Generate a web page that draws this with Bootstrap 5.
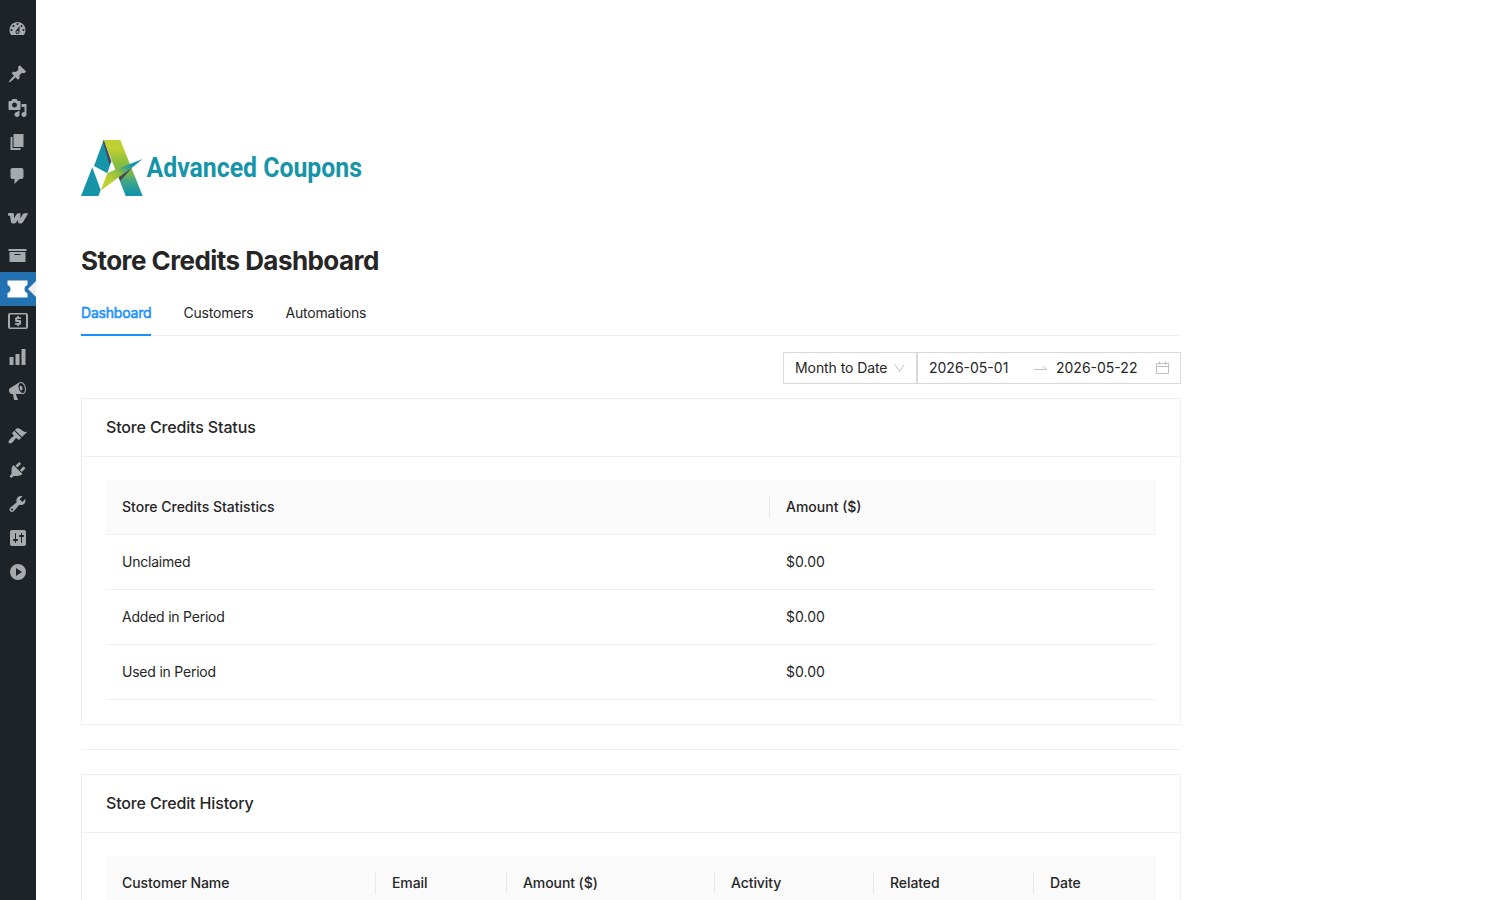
<!DOCTYPE html>
<html lang="en">
<head>
<meta charset="utf-8">
<meta name="viewport" content="width=device-width, initial-scale=1">
<title>Store Credits Dashboard</title>
<link href="https://cdn.jsdelivr.net/npm/bootstrap@5.3.0/dist/css/bootstrap.min.css" rel="stylesheet">
<style>
body{font-family:Inter,"Liberation Sans",sans-serif;font-size:14px;line-height:22px;color:#262626;background:#fff;height:900px;overflow:hidden}
.side-menu{width:36px;height:900px;background:#1d2327;padding-top:12px}
.side-menu a{height:34px;color:#a7aaad}
.side-menu svg{width:20px;height:20px;fill:currentColor;display:block;margin-left:7px;transform:translateX(.5px)}
.side-menu .wide-icon svg{margin-left:8px;transform:none}
.side-menu .gap-above{margin-top:11px}
.side-menu a.current{background:#2271b1;color:#fff}
.side-menu a.current svg{width:21px;transform:none}
.side-menu a.current::after{content:"";position:absolute;right:0;top:9px;border:8px solid transparent;border-right-color:#f0f0f1}
.page-area{width:1100px;height:900px;overflow:hidden;margin-left:45px;padding-top:140px}
.brand-logo{width:284px;height:56px;display:block;overflow:visible}
h1{font-size:26px;font-weight:700;line-height:32px;letter-spacing:-.56px;margin:49px 0 0}
.tab-strip{margin-top:13px;height:46px;border-bottom:1px solid #f0f0f0;gap:32px;padding-top:1px;letter-spacing:-.2px}
.tab-strip a{color:#262626;text-decoration:none;padding-top:11px;height:45px;white-space:nowrap}
.tab-strip a.on{color:#1890ff;border-bottom:2px solid #1890ff;-webkit-text-stroke:.5px}
.filters{margin-top:16px;height:32px}
.field{border:1px solid #d9d9d9;height:32px;padding:0 11px;white-space:nowrap}
.period{width:134px;letter-spacing:-.08px}
.range{width:264px;padding-right:11px}
.range .from{width:105px}
.range .to{width:99px}
.panel{border:1px solid #f0f0f0}
.filters + .panel{margin-top:14px}
.panel-head{height:58px;border-bottom:1px solid #f0f0f0;padding:0 24px 2px;font-size:16px;font-weight:500;letter-spacing:-.15px}
.panel-main{padding:23px 24px 24px}
.grid-table{table-layout:fixed;width:1050px;margin:0;border-collapse:separate;border-spacing:0}
.grid-table td,.grid-table th{height:55px;padding:0 16px;border-bottom:1px solid #f0f0f0;vertical-align:middle;font-weight:400;position:relative}
.grid-table td:first-child{letter-spacing:-.22px}
.grid-table th{background:#fafafa;font-weight:500}
.history th{letter-spacing:-.08px}
.grid-table th:not(:last-child)::after{content:"";position:absolute;right:0;top:16px;width:1px;height:22px;background:#e8e8e8}
.rule{height:1px;background:#f0f0f0;margin:24px 0}
</style>
</head>
<body class="d-flex">
<nav class="side-menu d-flex flex-column flex-shrink-0">
<a class="d-flex align-items-center"><svg viewBox="0 0 20 20"><path d="M3.760 16h12.480c1.100-1.370 1.760-3.110 1.760-5 0-4.420-3.580-8-8-8s-8 3.580-8 8c0 1.890.66 3.630 1.760 5zM10 4c.55 0 1 .45 1 1s-.45 1-1 1-1-.45-1-1 .45-1 1-1zM6 6c.55 0 1 .45 1 1s-.45 1-1 1-1-.45-1-1 .45-1 1-1zm8 0c.55 0 1 .45 1 1s-.45 1-1 1-1-.45-1-1 .45-1 1-1zm-5.370 5.550L12 7v6c0 1.100-.9 2-2 2s-2-.9-2-2c0-.57.24-1.080.63-1.450zM4 10c.55 0 1 .45 1 1s-.45 1-1 1-1-.45-1-1 .45-1 1-1zm12 0c.55 0 1 .45 1 1s-.45 1-1 1-1-.45-1-1 .45-1 1-1zm-5 3c0-.55-.45-1-1-1s-1 .45-1 1 .45 1 1 1 1-.45 1-1z"/></svg></a>
<a class="d-flex align-items-center gap-above"><svg viewBox="0 0 20 20"><path d="M10.440 3.020l1.820-1.820 6.360 6.350-1.830 1.820c-1.050-.68-2.480-.57-3.410.36l-.75.75c-.92.93-1.040 2.350-.35 3.410l-1.830 1.820-2.410-2.410-2.800 2.790c-.42.42-3.380 2.710-3.800 2.290s1.860-3.390 2.280-3.810l2.790-2.790L4.100 9.360l1.830-1.820c1.050.69 2.480.57 3.400-.36l.75-.75c.93-.92 1.050-2.350.36-3.410z"/></svg></a>
<a class="d-flex align-items-center"><svg viewBox="0 0 20 20"><path d="M13 11V4c0-.55-.45-1-1-1h-1.670L9 1H5L3.670 3H2c-.55 0-1 .45-1 1v7c0 .55.45 1 1 1h10c.55 0 1-.45 1-1zM7 4.500c1.380 0 2.500 1.120 2.500 2.500S8.380 9.500 7 9.500 4.500 8.380 4.500 7 5.620 4.500 7 4.500zM14 6h5v10.500c0 1.380-1.120 2.500-2.500 2.500S14 17.880 14 16.500s1.120-2.500 2.500-2.500c.17 0 .34.02.5.05V9h-3V6zm-4 8.050V13h2v3.500c0 1.380-1.120 2.500-2.500 2.500S7 17.880 7 16.500 8.120 14 9.500 14c.17 0 .34.02.5.05z"/></svg></a>
<a class="d-flex align-items-center"><svg viewBox="0 0 20 20"><path d="M6 15V2h10v13H6zm-1 1h8v2H3V5h2v11z"/></svg></a>
<a class="d-flex align-items-center"><svg viewBox="0 0 20 20"><path d="M5 2h9c1.100 0 2 .9 2 2v7c0 1.100-.9 2-2 2h-2l-5 5v-5H5c-1.100 0-2-.9-2-2V4c0-1.100.9-2 2-2z"/></svg></a>
<a class="d-flex align-items-center gap-above wide-icon"><svg viewBox="0 0 20 20"><path d="M.3 2.100h4.300q1.500 0 1.500 1.600L6 7.400l2.400-3.900q.8-1.300 2-1.300h2.100l-.2 5.200 2.300-3.900q.8-1.300 2.200-1.300h3.500l-5.200 8.800q-.9 1.400-2.200 1.400h-1.400q-1.500 0-1.500-1.600l.1-2.400-1.500 2.600q-.8 1.400-2.200 1.400H4.700q-1.600 0-1.800-1.600L2 4.700H.3Q-.4 3.400.3 2.100z"/></svg></a>
<a class="d-flex align-items-center"><svg viewBox="0 0 20 20"><path d="M19 4v2H1V4h18zM2 7h16v10H2V7zm11 3V9H7v1h6z"/></svg></a>
<a class="d-flex align-items-center current position-relative"><svg viewBox="0 0 21 20"><path d="M.5 1.500h20V6q-3 1-3 4t3 4v4.500H.5V14q3-1 3-4t-3-4z"/></svg></a>
<a class="d-flex align-items-center wide-icon"><svg viewBox="0 0 20 20"><path fill-rule="evenodd" d="M2 0h16q2 0 2 2v12q0 2-2 2H2q-2 0-2-2V2q0-2 2-2zm0 1.600v12.800h16V1.600z"/><path d="M9.200 3h1.800v1.200h1.900v1.700H9.300v1.200h2.600q1.200 0 1.200 1.200v2.300q0 1.200-1.200 1.200H11V13H9.200v-1.200H7.100v-1.700h3.900V8.900H8.300q-1.200 0-1.200-1.200V5.400q0-1.200 1.200-1.200h.9z"/></svg></a>
<a class="d-flex align-items-center"><svg viewBox="0 0 20 20"><path d="M18 18V2h-4v16h4zm-6 0V7H8v11h4zm-6 0v-8H2v8h4z"/></svg></a>
<a class="d-flex align-items-center"><svg viewBox="0 0 20 20"><path d="M18.150 5.940c.46 1.620.38 3.220-.02 4.480-.42 1.280-1.260 2.180-2.300 2.480-.16.06-.26.06-.4.060-.06.020-.12.020-.18.020-.06.020-.14.020-.22.020h-6.800l2.220 5.500c.02.14-.06.26-.14.34-.08.1-.24.16-.34.16H6.950c-.1 0-.26-.06-.34-.16-.08-.08-.16-.2-.14-.34l-1-5.500H4.250l-.02-.02c-.5.06-1.080-.18-1.540-.62s-.88-1.080-1.060-1.880c-.24-.8-.2-1.560-.02-2.200.18-.62.58-1.080 1.060-1.300l.02-.02 9-5.400c.1-.06.18-.1.24-.16.06-.04.14-.08.24-.12.16-.08.28-.12.5-.18 1.040-.3 2.240.1 3.220.98s1.840 2.240 2.260 3.860zm-2.580 5.980h-.02c.4-.1.74-.34 1.040-.7.58-.7.86-1.760.86-3.040 0-.64-.1-1.300-.28-1.980-.34-1.360-1.020-2.500-1.780-3.240s-1.680-1.100-2.460-.88c-.82.22-1.400.96-1.700 2-.32 1.040-.28 2.360.06 3.720.38 1.360 1 2.500 1.800 3.240.78.74 1.620 1.100 2.480.88zm-2.540-7.080c.22-.04.42-.02.62.04.38.16.76.48 1.020 1s.42 1.200.42 1.780c0 .3-.04.56-.12.8-.18.48-.44.84-.86.94-.34.1-.8-.06-1.140-.4s-.64-.86-.78-1.500c-.18-.62-.12-1.240.02-1.720s.48-.84.82-.94z"/></svg></a>
<a class="d-flex align-items-center gap-above"><svg viewBox="0 0 20 20"><path d="M14.480 11.060L7.410 3.990l1.500-1.500c.5-.56 2.300-.47 3.510.32 1.210.8 1.430 1.280 2.910 2.100 1.180.64 2.450 1.260 4.450.85zm-.71.71L6.700 4.700 4.930 6.470c-.39.39-.39 1.020 0 1.410l1.060 1.060c.39.39.39 1.030 0 1.420-.6.6-1.430 1.110-2.210 1.690-.35.26-.7.53-1.010.84C1.430 14.230.4 16.080 1.400 17.070c.99 1 2.840-.03 4.180-1.360.31-.31.58-.66.85-1.020.57-.78 1.080-1.610 1.690-2.210.39-.39 1.020-.39 1.410 0l1.060 1.060c.39.39 1.020.39 1.410 0z"/></svg></a>
<a class="d-flex align-items-center"><svg viewBox="0 0 20 20"><path d="M13.110 4.360L9.870 7.600 8 5.730l3.240-3.240c.35-.34 1.050-.2 1.560.32.52.51.66 1.210.31 1.550zm-8 1.770l.91-1.120 9.010 9.010-1.190.84c-.71.71-2.630 1.160-3.820 1.160H6.140L4.900 17.260c-.59.59-1.540.59-2.120 0-.59-.58-.59-1.530 0-2.120l1.240-1.240v-3.880c0-1.130.4-3.190 1.090-3.890zm7.260 3.970l3.240-3.240c.34-.35 1.040-.21 1.550.31.52.51.66 1.210.31 1.550l-3.240 3.250z"/></svg></a>
<a class="d-flex align-items-center"><svg viewBox="0 0 20 20"><path d="M16.680 9.770c-1.340 1.340-3.300 1.670-4.950.99l-5.410 6.520c-.99.99-2.590.99-3.580 0s-.99-2.590 0-3.570l6.520-5.420c-.68-1.650-.35-3.610.99-4.950 1.280-1.280 3.120-1.620 4.720-1.060l-2.890 2.890 2.820 2.820 2.860-2.870c.53 1.580.18 3.390-1.080 4.650zM3.810 16.210c.4.39 1.040.39 1.430 0 .4-.4.4-1.040 0-1.430-.39-.4-1.030-.4-1.430 0-.39.39-.39 1.030 0 1.430z"/></svg></a>
<a class="d-flex align-items-center wide-icon"><svg viewBox="0 0 20 20"><path d="M18 16V4c0-1.100-.9-2-2-2H4c-1.100 0-2 .9-2 2v12c0 1.100.9 2 2 2h12c1.100 0 2-.9 2-2zM8 11h1c.55 0 1 .45 1 1s-.45 1-1 1H8v1.500c0 .28-.22.5-.5.5s-.5-.22-.5-.5V13H6c-.55 0-1-.45-1-1s.45-1 1-1h1V5.500c0-.28.22-.5.5-.5s.5.22.5.5V11zm5-2h-1c-.55 0-1-.45-1-1s.45-1 1-1h1V5.500c0-.28.22-.5.5-.5s.5.22.5.5V7h1c.55 0 1 .45 1 1s-.45 1-1 1h-1v5.500c0 .28-.22.5-.5.5s-.5-.22-.5-.5V9z"/></svg></a>
<a class="d-flex align-items-center wide-icon"><svg viewBox="0 0 20 20"><path fill-rule="evenodd" d="M10 2a8 8 0 1 1 0 16 8 8 0 0 1 0-16zM8 6v8l6-4z"/></svg></a>
</nav>
<main class="page-area flex-shrink-0">
<svg class="brand-logo" viewBox="0 0 284 56">
<defs><linearGradient id="leg" x1="0" y1="0" x2="0" y2="1"><stop offset=".15" stop-color="#bed130"/><stop offset=".4" stop-color="#8cbf3f"/><stop offset=".6" stop-color="#7cb94c"/><stop offset=".72" stop-color="#45a783"/><stop offset=".95" stop-color="#1795a8"/></linearGradient>
<linearGradient id="swoosh" x1="0" y1="1" x2="1" y2="0"><stop offset=".25" stop-color="#bed130"/><stop offset=".5" stop-color="#8cbf3f"/><stop offset=".65" stop-color="#45a783"/><stop offset=".78" stop-color="#1795a8"/></linearGradient></defs>
<path fill="#1795a8" d="M22.700 0L30 22.300 26.300 33.300 13 26zM11.300 27.300L19.700 50 17.500 56H0z"/>
<path fill="url(#leg)" d="M22.700 0h16.600l22.400 56H44.700z"/>
<path fill="#4a4556" d="M22.700 0L30.500 21.500 28.500 24.500 22 2z"/>
<path fill="#4a4556" d="M37.300 36l14-8.500L39.300 41z"/>
<path fill="url(#swoosh)" d="M19.700 50.700l6.600-17.400 9.400-4.200 26-10.100-11 9-13.400 9.500z"/>
<text x="65.500" y="37.300" font-family="Roboto, sans-serif" font-weight="700" font-size="27" fill="#1795a8" textLength="215.500" lengthAdjust="spacingAndGlyphs">Advanced Coupons</text>
</svg>
<h1>Store Credits Dashboard</h1>
<div class="tab-strip d-flex"><a class="on">Dashboard</a><a>Customers</a><a>Automations</a></div>
<div class="filters d-flex justify-content-end">
<div class="field period d-flex align-items-center justify-content-between">Month to Date<svg width="12" height="12" viewBox="0 0 12 12" fill="none" stroke="#bfbfbf"><path d="M2 2.500L6.500 9.500l4.500-7"/></svg></div>
<div class="field range d-flex align-items-center"><span class="from">2026-05-01</span><svg width="22" height="14" viewBox="0 0 22 14" fill="none" stroke="#bfbfbf"><path d="M0 8.500h12.500L8.500 5"/></svg><span class="to">2026-05-22</span><svg width="14" height="14" viewBox="0 0 14 14" fill="none" stroke="#bfbfbf"><path d="M1.500 2.500h12v10h-12zM1.500 5.500h12M4.500 .5v3M10.500 .5v3"/></svg></div>
</div>
<section class="panel"><div class="panel-head d-flex align-items-center">Store Credits Status</div>
<div class="panel-main"><table class="grid-table"><colgroup><col style="width:664px"><col></colgroup>
<tr><th>Store Credits Statistics</th><th>Amount ($)</th></tr><tr><td>Unclaimed</td><td>$0.00</td></tr><tr><td>Added in Period</td><td>$0.00</td></tr><tr><td>Used in Period</td><td>$0.00</td></tr></table></div></section>
<div class="rule"></div>
<section class="panel"><div class="panel-head d-flex align-items-center">Store Credit History</div>
<div class="panel-main pb-0"><table class="grid-table history"><colgroup><col style="width:270px"><col style="width:131px"><col style="width:208px"><col style="width:159px"><col style="width:160px"><col></colgroup><tr><th>Customer Name</th><th>Email</th><th>Amount ($)</th><th>Activity</th><th>Related</th><th>Date</th></tr></table></div></section>
</main>
<script src="https://cdn.jsdelivr.net/npm/bootstrap@5.3.0/dist/js/bootstrap.bundle.min.js"></script>
</body>
</html>
